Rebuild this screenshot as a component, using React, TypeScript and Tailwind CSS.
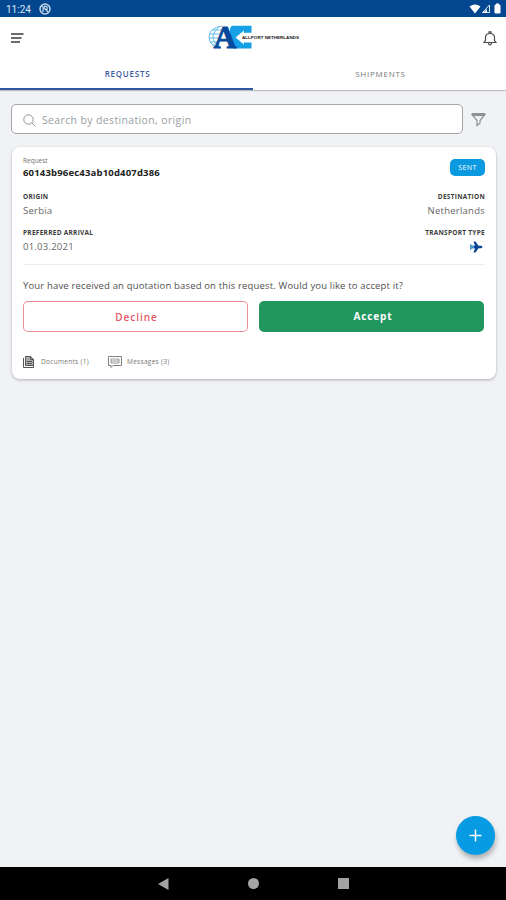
import clsx from "clsx";
import React, { ReactNode } from "react";

export default function App() {
  return (
    <div className="flex h-[900px] w-[506px] flex-col overflow-hidden bg-[#f0f2f6] font-['Open_Sans',sans-serif] text-[#444]">
      <StatusBar />
      <header className="z-10 flex h-[73px] shrink-0 flex-col bg-white shadow-[0_1px_1px_rgba(0,0,0,0.22)]">
        <div className="flex h-[42px] items-center justify-between pr-[9px] pl-[11px]">
          <button aria-label="menu">
            <MenuIcon />
          </button>
          <Logo />
          <button aria-label="notifications">
            <BellIcon />
          </button>
        </div>
        <nav className="flex h-[31px] text-[8px] tracking-[0.75px]">
          <Tab active>REQUESTS</Tab>
          <Tab>SHIPMENTS</Tab>
        </nav>
      </header>

      <main className="flex grow flex-col px-[11px] pt-[14px]">
        <div className="flex items-center">
          <label className="flex h-[30px] w-[452px] items-center rounded-[5px] border border-[#a5a7a9] bg-white pl-[11px]">
            <SearchIcon />
            <span className="ml-[6px] pt-[3px] text-[10.5px] tracking-[0.36px] text-[#9a9da0]">
              Search by destination, origin
            </span>
          </label>
          <button aria-label="filter" className="ml-[8px]">
            <FilterIcon />
          </button>
        </div>
        <RequestCard />
        <button
          aria-label="add request"
          className="mt-auto mb-[12px] flex size-[39px] items-center justify-center self-end rounded-full bg-[#069be3] shadow-[1px_4px_5px_rgba(0,0,0,0.28)]"
        >
          <svg width="13" height="13" viewBox="0 0 13 13">
            <path d="M6.500 .5v12M.5 6.500h12" stroke="#fff" strokeWidth="1.500" />
          </svg>
        </button>
      </main>
      <NavigationBar />
    </div>
  );
}

function Tab({ active, children }: { active?: boolean; children: ReactNode }) {
  return (
    <button
      className={clsx(
        "flex w-1/2 items-center justify-center border-b-2 pl-[2px]",
        active
          ? "border-[#3157a0] font-semibold text-[#3b5ba3]"
          : "border-transparent text-[#75787c]"
      )}
    >
      {children}
    </button>
  );
}

function RequestCard() {
  return (
    <section className="mt-[13px] ml-px h-[232px] w-[484px] rounded-[8px] bg-white px-[11px] pt-2 shadow-[0_1px_3px_rgba(0,0,0,0.28)]">
      <div className="flex items-start justify-between">
        <div>
          <p className="h-[11px] text-[6.5px] leading-[11px] text-[#777]">
            Request
          </p>
          <p className="text-[9.5px] leading-[13px] font-bold tracking-[0.18px] text-[#222]">
            60143b96ec43ab10d407d386
          </p>
        </div>
        <span className="mt-1 flex h-[17px] w-[35px] items-center justify-center rounded-[5px] bg-[#0b9ae0] pt-px text-[7px] tracking-[0.4px] text-white">
          SENT
        </span>
      </div>
      <div className="mt-[12px] flex justify-between">
        <Field label="ORIGIN">Serbia</Field>
        <Field label="DESTINATION" end>
          Netherlands
        </Field>
      </div>
      <div className="mt-[10px] flex justify-between">
        <Field label="PREFERRED ARRIVAL">01.03.2021</Field>
        <Field label="TRANSPORT TYPE" end>
          <PlaneIcon />
        </Field>
      </div>
      <hr className="mt-[11px] border-[#ececee]" />
      <p className="mt-[14px] text-[9.5px] leading-[14px] tracking-[0.155px] whitespace-nowrap text-[#505050]">
        Your have received an quotation based on this request. Would you like to
        accept it?
      </p>
      <div className="mt-2 flex gap-[11px]">
        <button className="h-[31px] w-[225px] rounded-[5px] pt-px pl-[2px] text-[10px] font-semibold tracking-[1px] text-[#e25567] shadow-[inset_0_0_0_1px_#ee8d98]">
          Decline
        </button>
        <button className="h-[31px] w-[225px] rounded-[5px] bg-[#21965f] pl-[3px] text-[10px] font-bold tracking-[0.85px] text-white">
          Accept
        </button>
      </div>
      <div className="mt-[22px] flex h-[15px] items-center text-[6.5px] tracking-[0.3px] text-[#777]">
        <DocumentIcon />
        <span className="ml-[7px] w-[67px]">Documents (1)</span>
        <MessageIcon />
        <span className="ml-[5px]">Messages (3)</span>
      </div>
    </section>
  );
}

type FieldProps = { label: string; end?: boolean; children: ReactNode };

function Field({ label, end, children }: FieldProps) {
  return (
    <div className={clsx("flex flex-col", end && "items-end")}>
      <span className="text-[6.5px] leading-[12px] font-bold tracking-[0.28px] text-[#3c3c3c]">
        {label}
      </span>
      <span className="flex h-[14px] items-center pt-px text-[9.5px] leading-[14px] tracking-[0.24px] text-[#666]">
        {children}
      </span>
    </div>
  );
}

function StatusBar() {
  return (
    <div className="flex h-[17px] shrink-0 items-center bg-[#02478f] pr-[5px] pl-[6px] font-['Roboto',sans-serif] text-[10px] text-[#dce8f5]">
      <span className="w-[33px] pt-px">11:24</span>
      <svg width="12" height="12" viewBox="0 0 12 12" fill="none" stroke="#c3d5ea">
        <circle cx="6" cy="6" r="5" strokeWidth="1.500" />
        <path d="M3 3l6 6M4 9V6l2-3 2 1v3" strokeWidth="1.300" />
      </svg>
      <svg className="ml-auto" width="34" height="12" viewBox="0 0 34 12" fill="#fff">
        <path d="M2.500 3.500Q8 -.5 13.500 3.500L8 10.500z" />
        <path d="M15.500 9.500L22.500 2v7.500z" fill="none" stroke="#e3edf7" />
        <path d="M16 10l4-4v4z" />
        <rect x="27.500" y="1.500" width="6" height="9" rx="1.200" />
        <rect x="29" y=".5" width="3" height="2" />
      </svg>
    </div>
  );
}

function NavigationBar() {
  return (
    <div className="flex h-[33px] shrink-0 items-center justify-center gap-[79px] bg-black">
      <svg width="11" height="12" viewBox="0 0 11 12" fill="#a3a3a3">
        <path d="M0 6L10.500 0v12z" />
      </svg>
      <span className="size-[11px] rounded-full bg-[#a3a3a3]" />
      <span className="size-[11px] bg-[#a3a3a3]" />
    </div>
  );
}

function Logo() {
  return (
    <svg width="92" height="42" viewBox="0 -9 92 42" className="-mt-[2px]">
      <g fill="none" stroke="#62bdea">
        <path d="M14 1Q1 3 1 12t12 11" />
        <path d="M12 1Q5 7 5 12t7 11" />
        <path d="M4 5h9M2 9h10M1 13h10M2 17h8M5 20h7" />
      </g>
      <path
        d="M25 .8h18.500v7H37l-7 4.700 7 5h6.500v6H26q-4-1-4-5V5q0-4 3-4.200z"
        fill="#16a0e6"
      />
      <path d="M27.500 12.500L36 5.500v3.500h8v7h-8v3.500z" fill="#fff" />
      <text
        x="5.500"
        y="23"
        fill="#07499b"
        stroke="#07499b"
        strokeWidth=".9"
        fontFamily="Liberation Serif, serif"
        fontWeight="bold"
        fontSize="32"
      >
        A
      </text>
      <text
        x="34"
        y="14"
        fill="#181818"
        fontFamily="Liberation Sans, sans-serif"
        fontWeight="bold"
        fontSize="4.400"
        textLength="57"
        lengthAdjust="spacingAndGlyphs"
      >
        ALLPORT NETHERLANDS
      </text>
    </svg>
  );
}

function MenuIcon() {
  return (
    <svg width="13" height="10" viewBox="0 0 13 10" stroke="#3d3d3d" strokeWidth="1.600">
      <path d="M0 1h12.500M0 5h10.500M0 9h9" />
    </svg>
  );
}

function BellIcon() {
  return (
    <svg width="14" height="15" viewBox="0 0 14 15" fill="none" stroke="#4c4c4c" strokeWidth="1.200">
      <path d="M1 11.500h12l-1.500-2V6.500Q11.500 2.500 7 2.500T2.500 6.500v3z" />
      <path d="M6 2V.8h2V2M5.500 12q0 2 1.500 2t1.500-2" />
    </svg>
  );
}

function SearchIcon() {
  return (
    <svg width="13" height="13" viewBox="0 0 13 13" fill="none" stroke="#909396" className="mt-[2px]">
      <circle cx="5.500" cy="5.500" r="4.700" />
      <path d="M9 9l3.500 3.500" />
    </svg>
  );
}

function FilterIcon() {
  return (
    <svg width="15" height="15" viewBox="0 0 15 15" fill="none" stroke="#8f9295" strokeWidth="1.200">
      <path d="M.8 1.500h13.400M1 2.500l5 6v5l3-2.300V8.500l5-6z" />
      <path d="M1.500 3.500h12" />
    </svg>
  );
}

function PlaneIcon() {
  return (
    <svg width="14" height="12" viewBox="0 0 14 12" className="mr-[2px]">
      <path
        d="M1 3l2 1.800h3L4.500.5H6.500l3 4.300H12Q13.500 5 13.500 6t-1.500 1.200H9.500l-3 4.300H4.500L6 7.200H3L1 9l.7-3z"
        fill="#0b4496"
      />
      <path d="M1 3l2 1.800h2v2.400H3L1 9l.7-3z" fill="#3f9fd4" />
    </svg>
  );
}

function DocumentIcon() {
  return (
    <svg width="11" height="12" viewBox="0 0 11 12" fill="none" stroke="#555">
      <path d="M2.500.5h5l3 3v6h-8z" fill="#aaa" />
      <path d="M7.500.5v3h3M4 5.500h5M4 7.500h5M.5 2v9.500h10v-2" />
    </svg>
  );
}

function MessageIcon() {
  return (
    <svg width="14" height="12" viewBox="0 0 14 12" fill="none" stroke="#808080">
      <path d="M.5.5h13v9H5L3 11.500v-2H.5z" />
      <path d="M3 3h8v4H3zM3 5h8" strokeWidth=".8" />
    </svg>
  );
}
